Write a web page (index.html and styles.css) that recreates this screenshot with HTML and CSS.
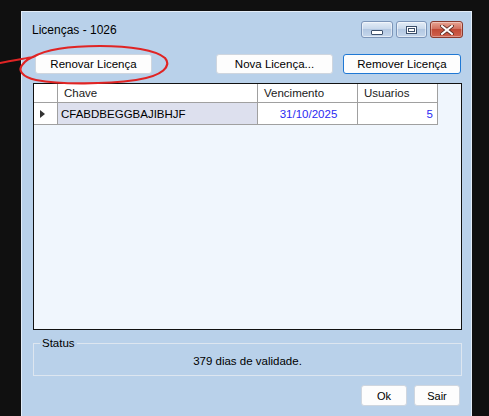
FILE: index.html
```html
<!DOCTYPE html>
<html lang="pt">
<head>
<meta charset="utf-8">
<title>Licenças - 1026</title>
<link rel="stylesheet" href="styles.css">
</head>
<body>
<div class="window">
  <div class="titlebar">
    <span class="title">Licenças - 1026</span>
    <div class="ctrls">
      <div class="cbtn min"><span class="glyph-min"></span></div>
      <div class="cbtn max"><span class="glyph-max"></span></div>
      <div class="cbtn close">
        <svg width="14" height="10" viewBox="0 0 14 10"><path d="M2 1 L12 9 M12 1 L2 9" stroke="#5a2a22" stroke-width="3.6" stroke-linecap="square"/><path d="M2 1 L12 9 M12 1 L2 9" stroke="#ffffff" stroke-width="2" stroke-linecap="square"/></svg>
      </div>
    </div>
  </div>
  <div class="toolbar">
    <button class="btn wide">Renovar Licença</button>
    <div class="spacer"></div>
    <button class="btn wide">Nova Licença...</button>
    <button class="btn wide default">Remover Licença</button>
  </div>
  <div class="grid">
    <div class="table">
      <div class="cell hdr rh"></div>
      <div class="cell hdr">Chave</div>
      <div class="cell hdr">Vencimento</div>
      <div class="cell hdr">Usuarios</div>
      <div class="cell rh"><span class="arrow"></span></div>
      <div class="cell key">CFABDBEGGBAJIBHJF</div>
      <div class="cell val center">31/10/2025</div>
      <div class="cell val right">5</div>
    </div>
  </div>
  <fieldset class="status">
    <legend>Status</legend>
    <div class="status-text">379 dias de validade.</div>
  </fieldset>
  <div class="footer">
    <button class="btn small">Ok</button>
    <button class="btn small">Sair</button>
  </div>
</div>
<svg class="scribble" width="489" height="416" viewBox="0 0 489 416">
  <path d="M0 63 C10 61 22 59 33 57 C45 50 70 46 100 46 C130 46 156 50 165 58 C172 66 163 76 136 80 C106 84 62 85 36 80 C22 77 17 70 23 64 C26 60 30 58 35 56" fill="none" stroke="#e02424" stroke-width="2.2" stroke-linecap="round" stroke-linejoin="round"/>
</svg>
</body>
</html>
```

FILE: styles.css
```css
html, body {
  margin: 0;
  padding: 0;
}
body {
  background: #101010;
  width: 489px;
  height: 416px;
  overflow: hidden;
  position: relative;
  font-family: "Liberation Sans", Arial, sans-serif;
  font-size: 11px;
  color: #000;
}
.window {
  box-sizing: border-box;
  margin: 11px 0 0 21px;
  width: 451px;
  height: 420px;
  background: #b9d1ea;
  border: 1px solid #e3edf8;
  border-bottom: none;
}
.titlebar {
  display: flex;
  align-items: flex-start;
  height: 42px;
  padding: 0 8px 0 10px;
}
.title {
  margin-top: 10px;
  line-height: 16px;
  font-size: 12px;
}
.ctrls {
  margin-left: auto;
  margin-top: 9px;
  display: flex;
  gap: 3px;
}
.cbtn {
  box-sizing: border-box;
  height: 17px;
  border-radius: 3px;
  display: flex;
  align-items: center;
  justify-content: center;
}
.min, .max {
  width: 32px;
  border: 1px solid #7c95b8;
  background: linear-gradient(#e4edf7 0%, #c9d9ec 45%, #b3c8e2 50%, #c6d7ec 100%);
  box-shadow: inset 0 0 0 1px rgba(255,255,255,0.5);
}
.max { width: 31px; }
.close {
  width: 33px;
  border: 1px solid #8a3a2e;
  background: linear-gradient(#e8a493 0%, #d2715f 45%, #c14a36 50%, #d0614d 100%);
  box-shadow: inset 0 0 0 1px rgba(255,255,255,0.35);
}
.glyph-min {
  display: block;
  width: 10px;
  height: 3px;
  margin-top: 5px;
  background: #fff;
  border: 1px solid #3d506b;
  border-radius: 1px;
}
.glyph-max {
  display: block;
  box-sizing: border-box;
  width: 11px;
  height: 8px;
  border: 1px solid #3d506b;
  background: #fff;
  box-shadow: inset 0 0 0 1px #fff, inset 0 0 0 2px #3d506b;
}
.toolbar {
  display: flex;
  gap: 10px;
  padding: 0 10px 0 13px;
  height: 20px;
}
.spacer { flex: 1; }
.btn {
  font-family: "Liberation Sans", Arial, sans-serif;
  font-size: 11px;
  color: #000;
  background: #fdfdfd;
  border: 1px solid #cfd6df;
  border-radius: 3px;
  padding: 0;
  margin: 0;
  box-sizing: border-box;
}
.wide {
  width: 117px;
  height: 20px;
  font-size: 11.5px;
}
.default {
  width: 118px;
  border-color: #1f78d4;
}
.grid {
  box-sizing: border-box;
  margin: 9px 9px 0 11px;
  height: 247px;
  border: 1px solid #111;
  background: #f0f6fd;
}
.table {
  display: grid;
  grid-template-columns: 24px 200px 100px 80px;
  grid-template-rows: 19px 22px;
  font-size: 11.5px;
}
.cell {
  box-sizing: border-box;
  background: #fff;
  border-right: 1px solid #a0a0a0;
  border-bottom: 1px solid #a0a0a0;
  display: flex;
  align-items: center;
  white-space: nowrap;
  overflow: hidden;
}
.hdr {
  padding-left: 6px;
  color: #1a1a1a;
}
.hdr.rh { padding: 0; }
.rh {
  justify-content: center;
}
.arrow {
  display: block;
  width: 0;
  height: 0;
  border-top: 4px solid transparent;
  border-bottom: 4px solid transparent;
  border-left: 5px solid #333;
  margin-left: -6px;
}
.key {
  background: #dde0ee;
  padding-left: 3px;
}
.val {
  color: #2a2af2;
}
.center {
  justify-content: center;
  padding-left: 2px;
}
.right {
  justify-content: flex-end;
  padding-right: 4px;
}
.status {
  box-sizing: border-box;
  margin: 6px 9px 0 11px;
  height: 40px;
  padding: 0;
  border: 1px solid #dde6f0;
  border-radius: 0;
}
.status legend {
  margin-left: 6px;
  padding: 0 2px;
  line-height: 14px;
  font-size: 11.5px;
}
.status-text {
  text-align: center;
  line-height: 14px;
  margin-top: 4px;
  font-size: 11.5px;
}
.footer {
  display: flex;
  justify-content: flex-end;
  gap: 7px;
  margin-top: 9px;
  padding-right: 11px;
}
.small {
  width: 46px;
  height: 21px;
  font-size: 11px;
}
.scribble {
  position: absolute;
  left: 0;
  top: 0;
  pointer-events: none;
}
```
